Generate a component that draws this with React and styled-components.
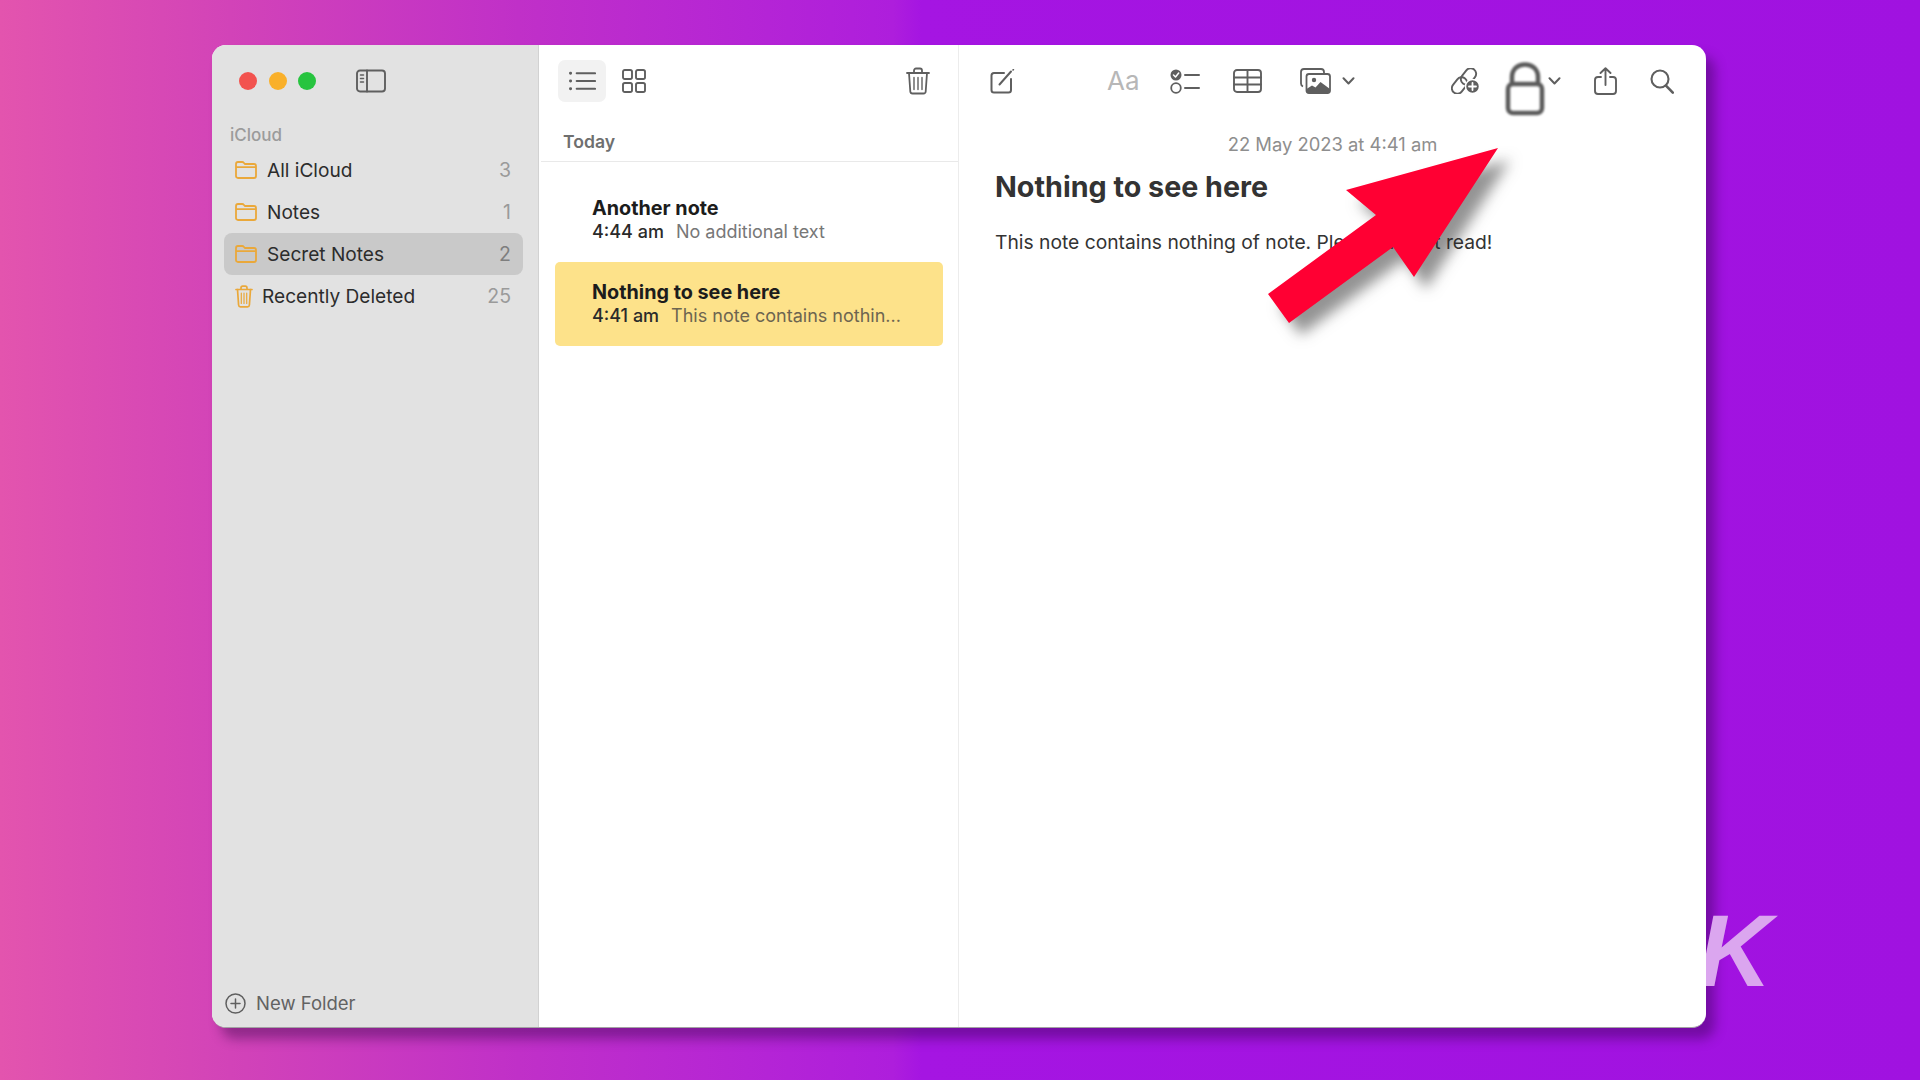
import React from "react";
import styled, { createGlobalStyle } from "styled-components";

const Global = createGlobalStyle`
  html, body { margin: 0; padding: 0; height: 100%; }
  body { font-family: Inter, "Noto Sans", "Liberation Sans", sans-serif; -webkit-font-smoothing: antialiased; }
`;

const Stage = styled.div`
  position: relative;
  width: 1920px;
  height: 1080px;
  overflow: hidden;
  padding: 45px 214px 52px 212px;
  box-sizing: border-box;
  background: linear-gradient(90deg, #e354ae 0%, #d243b8 12%, #c030c8 27%, #b424d6 40%, #ae1edc 46.5%, #a515e2 48%, #a012e0 100%);
`;

const Watermark = styled.div`
  position: absolute;
  left: 1698px;
  top: 886px;
  font-family: "Liberation Sans", sans-serif;
  font-weight: 700;
  font-style: italic;
  font-size: 102px;
  line-height: 130px;
  color: #dba6ef;
`;

const Window = styled.div`
  position: relative;
  display: grid;
  grid-template-columns: 327px 420px 1fr;
  height: 100%;
  border-radius: 14px;
  overflow: hidden;
  background: #fff;
  border-bottom: 1.5px solid #a3a3a3;
  box-sizing: border-box;
`;

const WindowShadow = styled.div`
  height: 100%;
  border-radius: 14px;
  box-shadow: 9px 11px 12px rgba(40, 0, 60, 0.38);
`;

const Sidebar = styled.aside`
  display: flex;
  flex-direction: column;
  background: #e2e2e2;
  border-right: 1px solid #d2d2d2;
  padding: 0 15px 0 12px;
  box-sizing: border-box;
`;

const TitleBar = styled.div`
  display: flex;
  align-items: center;
  height: 72px;
  padding: 0 0 0 15px;
  flex: none;
`;

const Lights = styled.div`
  display: flex;
  gap: 11.5px;
  margin-right: 40px;
`;

const Light = styled.span`
  width: 18px;
  height: 18px;
  border-radius: 50%;
  background: ${(p) => p.$color};
`;

const GroupLabel = styled.div`
  font-size: 17px;
  font-weight: 500;
  color: #9b9b9b;
  line-height: 20px;
  padding: 8px 0 0 6px;
  height: 32px;
  box-sizing: border-box;
`;

const FolderRow = styled.div`
  display: flex;
  align-items: center;
  height: 42px;
  padding: 0 12px 0 ${(p) => p.$pad || 10}px;
  border-radius: 8px;
  background: ${(p) => (p.$active ? "#c9c9c9" : "transparent")};
  font-size: 19.1px;
  color: #2c2c2c;
`;

const FolderName = styled.span`
  flex: 1;
  margin-left: ${(p) => p.$gap || 10}px;
`;

const Count = styled.span`
  color: ${(p) => (p.$active ? "#7e7e7e" : "#9a9a9a")};
  font-size: 19.5px;
`;

const NewFolder = styled.div`
  display: flex;
  align-items: center;
  gap: 10px;
  margin-top: auto;
  height: 20px;
  padding: 0 0 14px 1px;
  font-size: 18.5px;
  color: #626262;
`;

const ListColumn = styled.section`
  display: flex;
  flex-direction: column;
  border-right: 1.5px solid #ececec;
  box-sizing: border-box;
  padding-left: 2px;
`;

const ListToolbar = styled.div`
  display: flex;
  align-items: center;
  height: 72px;
  padding: 0 28px 0 17px;
  box-sizing: border-box;
  flex: none;
`;

const ViewButton = styled.div`
  display: flex;
  align-items: center;
  justify-content: center;
  width: 48px;
  height: 42px;
  border-radius: 7px;
  margin-right: 4px;
  background: ${(p) => (p.$active ? "#f2f2f2" : "transparent")};
`;

const Spring = styled.div`
  flex: 1;
`;

const SectionHead = styled.div`
  height: 45px;
  padding: 14px 0 0 22px;
  box-sizing: border-box;
  font-size: 17.6px;
  font-weight: 600;
  line-height: 22px;
  color: #6f6f6f;
  border-bottom: 1.5px solid #e9e9e9;
  flex: none;
`;

const NoteCard = styled.div`
  display: flex;
  flex-direction: column;
  justify-content: center;
  height: 84px;
  margin: ${(p) => p.$mt}px 15px 0 14px;
  padding-left: 37px;
  border-radius: 5px;
  background: ${(p) => (p.$active ? "#fde28a" : "transparent")};
`;

const NoteTitle = styled.div`
  font-size: 19.8px;
  font-weight: 700;
  line-height: 23px;
  color: #1c1c1c;
`;

const NoteMeta = styled.div`
  display: flex;
  gap: 12px;
  font-size: 18px;
  line-height: 23px;
  white-space: nowrap;
`;

const NoteTime = styled.span`
  font-weight: 500;
  color: #2a2a2a;
`;

const NotePreview = styled.span`
  color: ${(p) => (p.$active ? "#6d6550" : "#777777")};
`;

const Editor = styled.section`
  display: flex;
  flex-direction: column;
  min-width: 0;
`;

const EditorToolbar = styled.div`
  display: flex;
  align-items: center;
  height: 72px;
  padding: 0 0 0 31px;
  box-sizing: border-box;
  flex: none;
`;

const FontLabel = styled.span`
  font-size: 26px;
  line-height: 30px;
  color: #b7b7b7;
`;

const IconSlot = styled.div`
  display: flex;
  align-items: center;
  flex: none;
  margin-left: ${(p) => p.$ml || 0}px;
`;

const DateLine = styled.div`
  text-align: center;
  font-size: 18.4px;
  line-height: 22px;
  color: #8e8e8e;
  margin-top: 16px;
`;

const Article = styled.article`
  padding: 14px 36px;
`;

const NoteHeading = styled.h1`
  margin: 0 0 25px;
  font-size: 28.7px;
  line-height: 36px;
  font-weight: 700;
  color: #333333;
`;

const NoteBody = styled.p`
  margin: 0;
  font-size: 19.25px;
  line-height: 24px;
  color: #333333;
`;

const LockOverlay = styled.svg`
  position: absolute;
  left: 1293px;
  top: 17px;
  filter: blur(0.8px);
`;

const ArrowOverlay = styled.svg`
  position: absolute;
  left: 1040px;
  top: 85px;
  filter: drop-shadow(12px 12px 7px rgba(40, 40, 40, 0.5));
`;

const ic = { fill: "none", stroke: "#5f5f5f", strokeWidth: 2, strokeLinecap: "round", strokeLinejoin: "round" };

const FolderIcon = () => (
  <svg width="22" height="18" viewBox="0 0 22 18" fill="none" stroke="#eaa83a" strokeWidth="1.8" strokeLinejoin="round">
    <path d="M1 3.2C1 2 1.8 1 3 1h4.2c.8 0 1.3.4 1.8 1l.8 1H19c1.2 0 2 .9 2 2v10c0 1.2-.8 2-2 2H3c-1.2 0-2-.8-2-2z" />
    <path d="M1 6.2h20" />
  </svg>
);

const SideTrash = () => (
  <svg width="18" height="23" viewBox="0 0 18 23" fill="none" stroke="#eaa83a" strokeWidth="1.7" strokeLinecap="round" strokeLinejoin="round">
    <path d="M1 4.5h16M6 4.5V3c0-1 .7-1.8 1.7-1.8h2.6C11.300 1.200 12 2 12 3v1.500" />
    <path d="M2.500 4.500 3.600 20c.1 1 .8 1.800 1.800 1.800h7.200c1 0 1.700-.8 1.800-1.800l1.100-15.500" />
    <path d="M6.300 8v10.500M9 8v10.500M11.700 8v10.500" strokeWidth="1.200" />
  </svg>
);

const PanelIcon = () => (
  <svg width="30" height="24" viewBox="0 0 30 24" {...ic} strokeWidth="1.9" style={{ flex: "none" }}>
    <rect x="1" y="1.500" width="28" height="21" rx="3" />
    <path d="M11 1.500v21" />
    <path d="M4.500 6h3M4.500 9.500h3M4.500 13h3" strokeWidth="1.500" />
  </svg>
);

const ListIcon = () => (
  <svg width="27" height="20" viewBox="0 0 28 20" {...ic} strokeWidth="2.2">
    <path d="M8 2h19M8 10h19M8 18h19" />
    <path d="M1.500 2h.2M1.500 10h.2M1.500 18h.2" strokeWidth="3" />
  </svg>
);

const GridIcon = () => (
  <svg width="24" height="24" viewBox="0 0 24 24" {...ic} strokeWidth="1.9">
    <rect x="1" y="1" width="9" height="9" rx="1.800" />
    <rect x="14" y="1" width="9" height="9" rx="1.800" />
    <rect x="1" y="14" width="9" height="9" rx="1.800" />
    <rect x="14" y="14" width="9" height="9" rx="1.800" />
  </svg>
);

const TrashIcon = () => (
  <svg width="24" height="28" viewBox="0 0 24 28" {...ic} strokeWidth="1.800">
    <path d="M1 6h22M8 6V3.500C8 2.300 8.900 1.500 10 1.500h4c1.100 0 2 .8 2 2V6" />
    <path d="M3 6l1.300 18.500c.1 1.200 1 2 2.200 2h11c1.200 0 2.100-.8 2.200-2L21 6" />
    <path d="M8 10.500v12M12 10.500v12M16 10.500v12" strokeWidth="1.400" />
  </svg>
);

const ComposeIcon = () => (
  <svg width="25" height="25" viewBox="0 0 25 25" {...ic} strokeWidth="2">
    <path d="M14 4H4C2.600 4 1.500 5 1.500 6.500V21c0 1.500 1.100 2.500 2.500 2.500h14.500c1.500 0 2.500-1 2.500-2.500V10" />
    <path d="M9.500 15.500 21 2.500" />
    <path d="M23 1l.4-.4" strokeWidth="1.600" />
  </svg>
);

const ChecklistIcon = () => (
  <svg width="30" height="25" viewBox="0 0 30 25">
    <circle cx="6" cy="6" r="5.500" fill="#5f5f5f" />
    <path d="M3.500 6l2 2 3.200-4" fill="none" stroke="#fff" strokeWidth="1.500" strokeLinecap="round" strokeLinejoin="round" />
    <circle cx="6" cy="19" r="4.800" fill="none" stroke="#5f5f5f" strokeWidth="1.800" />
    <path d="M15 6h14M15 19h14" stroke="#5f5f5f" strokeWidth="2" strokeLinecap="round" />
  </svg>
);

const TableIcon = () => (
  <svg width="29" height="24" viewBox="0 0 29 24" {...ic} strokeWidth="1.900">
    <rect x="1" y="1" width="27" height="22" rx="3" />
    <path d="M1 8.500h27M1 15.500h27M14.500 1V23" />
  </svg>
);

const MediaIcon = () => (
  <svg width="31" height="26" viewBox="0 0 31 26">
    <path d="M3 18.500C1.800 18 1 17 1 15.500V4c0-1.700 1.300-3 3-3h17c1.700 0 3 1.300 3 3v1" fill="none" stroke="#5f5f5f" strokeWidth="1.800" />
    <rect x="6.500" y="6" width="23.500" height="19" rx="2.500" fill="#fff" stroke="#5f5f5f" strokeWidth="1.800" />
    <circle cx="14" cy="12" r="2.200" fill="#5f5f5f" />
    <path d="M6.500 24v-3l5.500-3.500 3.500 2 5-5.500 9.500 7V25H8z" fill="#5f5f5f" />
  </svg>
);

const Chevron = () => (
  <svg width="13" height="8" viewBox="0 0 13 8" {...ic} strokeWidth="2">
    <path d="M1.500 1.200 6.500 6.500l5-5.300" />
  </svg>
);

const CollabIcon = () => (
  <svg width="29" height="26" viewBox="0 0 29 26" fill="none">
    <g stroke="#5f5f5f" strokeWidth="1.900" strokeLinecap="round">
      <rect x="-9" y="-5.500" width="18" height="11" rx="5.500" transform="translate(8.500 17.500) rotate(-52)" />
      <rect x="-9" y="-5.500" width="18" height="11" rx="5.500" transform="translate(17.500 8.500) rotate(-52)" />
    </g>
    <circle cx="21.500" cy="18.500" r="7" fill="#5f5f5f" stroke="#fff" strokeWidth="1.500" />
    <path d="M21.500 15v7M18 18.500h7" stroke="#fff" strokeWidth="1.800" strokeLinecap="round" />
  </svg>
);

const ShareIcon = () => (
  <svg width="23" height="28" viewBox="0 0 23 28" {...ic} strokeWidth="1.900">
    <path d="M7 10H4c-1.700 0-3 1.300-3 3v11c0 1.700 1.300 3 3 3h15c1.700 0 3-1.300 3-3V13c0-1.700-1.300-3-3-3h-3" />
    <path d="M11.500 18V1.500M6.500 6l5-4.800 5 4.800" />
  </svg>
);

const SearchIcon = () => (
  <svg width="24" height="25" viewBox="0 0 24 25" {...ic} strokeWidth="2.100">
    <circle cx="10" cy="10" r="8.500" />
    <path d="M16.200 16.800 22.800 23.600" strokeWidth="2.600" />
  </svg>
);

const PlusCircle = () => (
  <svg width="21" height="21" viewBox="0 0 21 21" {...ic} strokeWidth="1.500" style={{ flex: "none" }}>
    <circle cx="10.500" cy="10.500" r="9.500" />
    <path d="M10.500 6v9M6 10.500h9" />
  </svg>
);

const folders = [
  { name: "All iCloud", count: 3 },
  { name: "Notes", count: 1 },
  { name: "Secret Notes", count: 2, active: true },
  { name: "Recently Deleted", count: 25, trash: true },
];

const notes = [
  { title: "Another note", time: "4:44 am", preview: "No additional text", mt: 16 },
  { title: "Nothing to see here", time: "4:41 am", preview: "This note contains nothin...", mt: 0, active: true },
];

export default function App() {
  return (
    <Stage>
      <Global />
      <Watermark>K</Watermark>
      <WindowShadow>
        <Window>
          <Sidebar>
            <TitleBar>
              <Lights>
                <Light $color="#f2534f" />
                <Light $color="#f9b02a" />
                <Light $color="#27c43f" />
              </Lights>
              <PanelIcon />
            </TitleBar>
            <GroupLabel>iCloud</GroupLabel>
            {folders.map((f) => (
              <FolderRow key={f.name} $active={f.active} $pad={11}>
                {f.trash ? <SideTrash /> : <FolderIcon />}
                <FolderName $gap={f.trash ? 9 : 10}>{f.name}</FolderName>
                <Count $active={f.active}>{f.count}</Count>
              </FolderRow>
            ))}
            <NewFolder>
              <PlusCircle />
              New Folder
            </NewFolder>
          </Sidebar>
          <ListColumn>
            <ListToolbar>
              <ViewButton $active><ListIcon /></ViewButton>
              <ViewButton><GridIcon /></ViewButton>
              <Spring />
              <TrashIcon />
            </ListToolbar>
            <SectionHead>Today</SectionHead>
            {notes.map((n) => (
              <NoteCard key={n.title} $active={n.active} $mt={n.mt}>
                <NoteTitle>{n.title}</NoteTitle>
                <NoteMeta>
                  <NoteTime>{n.time}</NoteTime>
                  <NotePreview $active={n.active}>{n.preview}</NotePreview>
                </NoteMeta>
              </NoteCard>
            ))}
          </ListColumn>
          <Editor>
            <EditorToolbar>
              <IconSlot><ComposeIcon /></IconSlot>
              <IconSlot $ml={92}><FontLabel>Aa</FontLabel></IconSlot>
              <IconSlot $ml={30}><ChecklistIcon /></IconSlot>
              <IconSlot $ml={33}><TableIcon /></IconSlot>
              <IconSlot $ml={38}><MediaIcon /></IconSlot>
              <IconSlot $ml={11}><Chevron /></IconSlot>
              <IconSlot $ml={96}><CollabIcon /></IconSlot>
              <IconSlot $ml={68}><Chevron /></IconSlot>
              <IconSlot $ml={33}><ShareIcon /></IconSlot>
              <IconSlot $ml={33}><SearchIcon /></IconSlot>
            </EditorToolbar>
            <DateLine>22 May 2023 at 4:41 am</DateLine>
            <Article>
              <NoteHeading>Nothing to see here</NoteHeading>
              <NoteBody>This note contains nothing of note. Please do not read!</NoteBody>
            </Article>
          </Editor>
          <LockOverlay width="40" height="54" viewBox="0 0 40 54" fill="none" stroke="#5a5a5a" strokeWidth="4.500">
            <path d="M7 22V15C7 7.500 12.500 2.500 20 2.500S33 7.500 33 15v7" />
            <rect x="3" y="22" width="34" height="29" rx="5" />
          </LockOverlay>
          <ArrowOverlay width="280" height="220" viewBox="0 0 280 220">
            <polygon fill="#ff0033" points="246,18 94,60 124,85 16,164 37,193 141,117 162,147" />
          </ArrowOverlay>
        </Window>
      </WindowShadow>
    </Stage>
  );
}
